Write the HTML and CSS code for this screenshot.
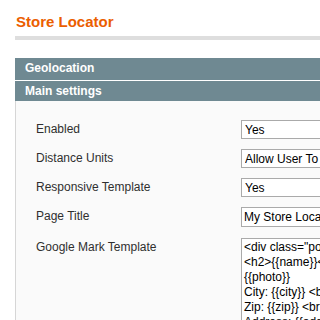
FILE: index.html
```html
<!DOCTYPE html>
<html lang="en">
<head>
    <meta charset="UTF-8">
    <meta name="viewport" content="width=device-width, initial-scale=1.0">
    <title>Store Locator</title>
    <link rel="stylesheet" href="styles.css">
</head>
<body>
    <div class="page">
        <div class="content-header">
            <h3>Store Locator</h3>
        </div>

        <div class="section-head">Geolocation</div>
        <div class="section-head open">Main settings</div>

        <div class="fieldset">
            <div class="row">
                <label>Enabled</label>
                <select class="field"><option>Yes</option></select>
            </div>
            <div class="row">
                <label>Distance Units</label>
                <select class="field"><option>Allow User To Choose</option></select>
            </div>
            <div class="row">
                <label>Responsive Template</label>
                <select class="field"><option>Yes</option></select>
            </div>
            <div class="row">
                <label>Page Title</label>
                <input class="field text" type="text" value="My Store Locator">
            </div>
            <div class="row">
                <label>Google Mark Template</label>
                <textarea class="field area" wrap="off">&lt;div class="popup"&gt;
&lt;h2&gt;{{name}}&lt;/h2&gt;
{{photo}}
City: {{city}} &lt;br&gt;
Zip: {{zip}} &lt;br&gt;
Address: {{address}} &lt;br&gt;
Phone: {{phone}} &lt;br&gt;</textarea>
            </div>
        </div>
    </div>
</body>
</html>
```

FILE: styles.css
```css
html, body {
    margin: 0;
    padding: 0;
    overflow: hidden;
    background: #ffffff;
}
body {
    font-family: Arial, "Liberation Sans", sans-serif;
    font-size: 12px;
    color: #2f2f2f;
}
.page {
    padding-left: 15px;
    width: 305px;
    height: 320px;
    overflow: hidden;
}
.content-header {
    padding: 13px 0 5px 1px;
    border-bottom: 4px solid #dedede;
    margin-bottom: 18px;
}
.content-header h3 {
    margin: 0;
    font-size: 15px;
    line-height: 18px;
    color: #eb5e00;
}
.section-head {
    background: #6f8992;
    color: #ffffff;
    font-weight: bold;
    font-size: 12px;
    height: 22px;
    line-height: 21px;
    padding-left: 10px;
    border-bottom: 1px solid #ffffff;
}
.section-head.open {
    height: 20px;
    line-height: 20px;
    border-bottom: none;
}
.fieldset {
    background: #fafafa;
    border-left: 1px solid #d6d6d6;
    padding: 19px 0 0 20px;
    display: flex;
    flex-direction: column;
    gap: 10px;
    height: 300px;
    overflow: hidden;
}
.row {
    display: flex;
    align-items: flex-start;
}
.row label {
    width: 205px;
    flex-shrink: 0;
    line-height: 15px;
    padding-top: 2px;
    color: #2f2f2f;
}
.field {
    box-sizing: border-box;
    width: 240px;
    flex-shrink: 0;
    height: 19px;
    margin: 0;
    border: 1px solid #aaaaaa;
    background: #ffffff;
    font-family: Arial, "Liberation Sans", sans-serif;
    font-size: 12px;
    color: #000000;
    padding: 0 0 0 3px;
    border-radius: 0;
    appearance: none;
    outline: none;
}
.text {
    height: 20px;
    padding-left: 2px;
}
.row:nth-child(5) {
    margin-top: 1px;
}
.area {
    height: 120px;
    padding: 1px 2px;
    line-height: 15px;
    resize: none;
    overflow: hidden;
    white-space: pre;
}
```
